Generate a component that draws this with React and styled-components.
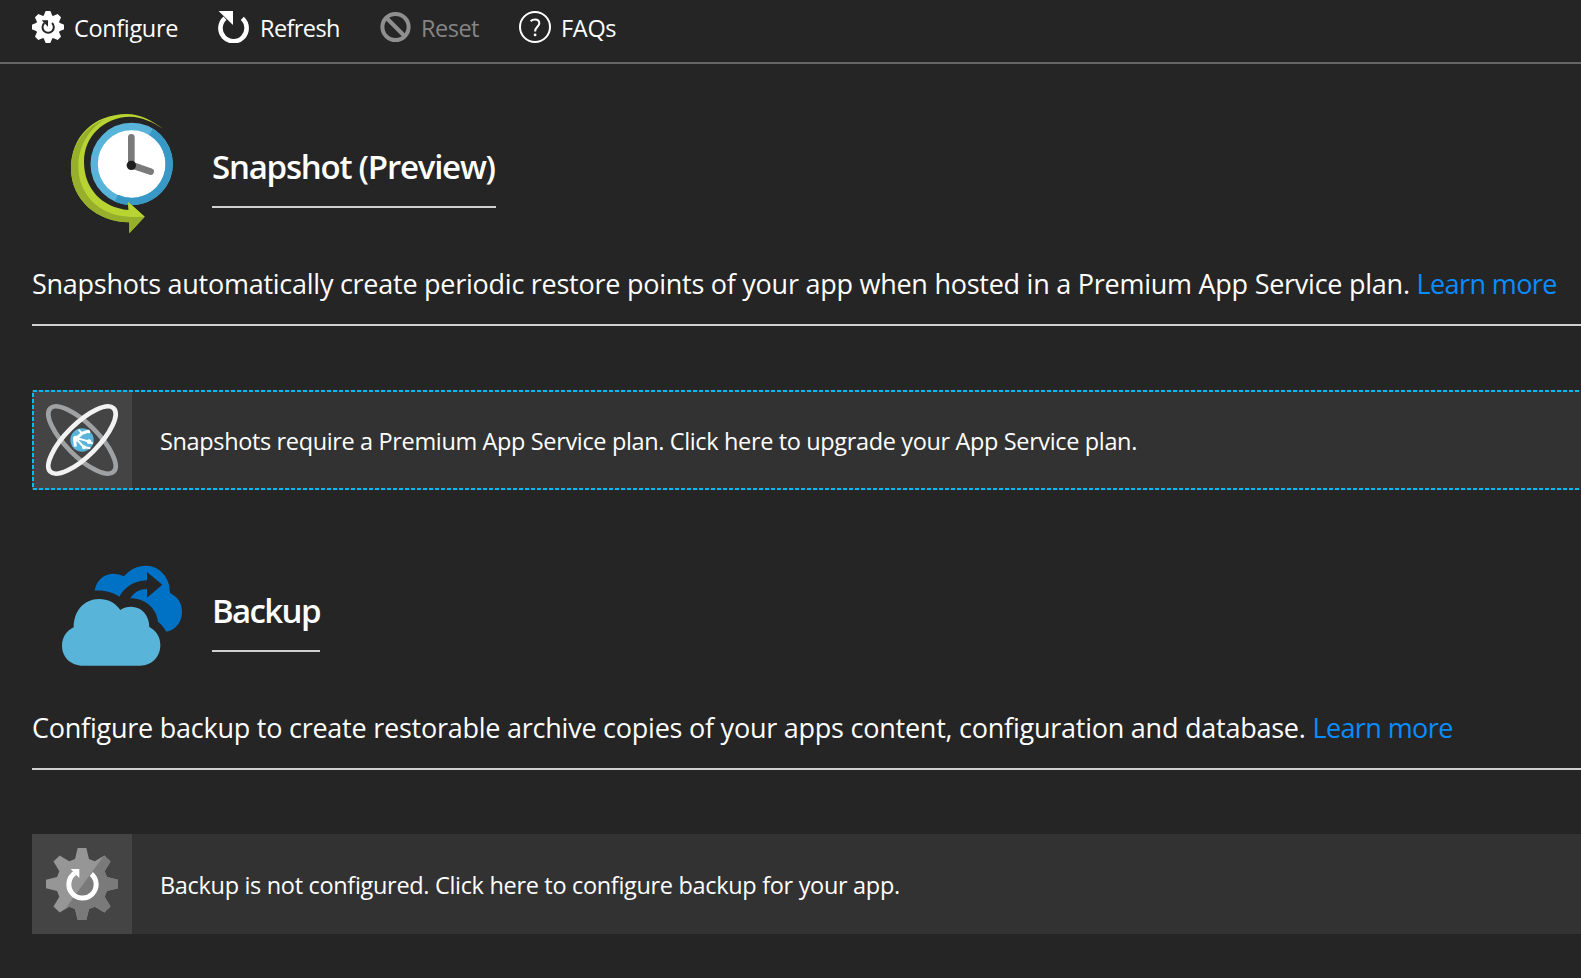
import React from "react";
import styled, { createGlobalStyle } from "styled-components";

const Global = createGlobalStyle`
  html, body { margin: 0; background: #252525; }
  body { overflow: hidden; font-family: "Open Sans", "Noto Sans", sans-serif; color: #fff; }
`;

const Page = styled.main`
  width: 100%;
  height: 978px;
  overflow: hidden;
  background: #252525;
`;

const Toolbar = styled.nav`
  box-sizing: border-box;
  height: 64px;
  padding: 11px 0 0 32px;
  border-bottom: 2px solid #666;
  display: flex;
  align-items: flex-start;
`;

const ToolButton = styled.button`
  display: flex;
  gap: ${(p) => (p.$muted ? 9 : 10)}px;
  width: ${(p) => p.$width}px;
  padding: 0;
  border: 0;
  background: none;
  color: ${(p) => (p.$muted ? "#858585" : "#fff")};
  font: 400 23.5px/32px "Open Sans", sans-serif;
  letter-spacing: ${(p) => p.$track}px;
  white-space: nowrap;
  text-align: left;
  svg { flex: none; }
`;

const ToolLabel = styled.span`
  padding-top: 1px;
`;

const Section = styled.section`
  height: 444px;
`;

const Header = styled.header`
  display: flex;
  height: 196px;
  padding-left: 50px;
`;

const HeroIcon = styled.svg`
  flex: none;
  width: 150px;
  height: 150px;
  margin-top: 36px;
`;

const Title = styled.h2`
  box-sizing: border-box;
  margin: 78px 0 0 12px;
  width: ${(p) => p.$width}px;
  height: 66px;
  border-bottom: 2px solid #d0d0d0;
  font-size: 33px;
  font-weight: 600;
  line-height: 50px;
  letter-spacing: ${(p) => p.$track}px;
  white-space: nowrap;
`;

const Description = styled.p`
  box-sizing: border-box;
  margin: 0 0 0 32px;
  height: 66px;
  border-bottom: 2px solid #d0d0d0;
  font-size: 27px;
  line-height: 48px;
  letter-spacing: ${(p) => p.$track}px;
  white-space: nowrap;
`;

const Link = styled.a`
  color: #0a8cff;
  letter-spacing: ${(p) => p.$track}px;
`;

const Card = styled.div`
  position: relative;
  display: flex;
  align-items: center;
  height: 100px;
  margin: 64px 0 0 32px;
  background: #323232;
`;

const Tile = styled.div`
  width: 100px;
  height: 100px;
  flex: none;
  background: #444;
`;

const CardText = styled.span`
  padding: 2px 0 0 28px;
  font-size: 23.5px;
  letter-spacing: ${(p) => p.$track}px;
  white-space: nowrap;
`;

const Focus = styled.svg`
  position: absolute;
  inset: 0;
  width: 100%;
  height: 100%;
`;

const gear = (tip, tipHalf, base, baseHalf) => {
  const pts = [];
  for (let k = 0; k < 8; k++) {
    const a = (k * Math.PI) / 4;
    [[-baseHalf, -base], [-tipHalf, -tip], [tipHalf, -tip], [baseHalf, -base]].forEach(([x, y]) => {
      pts.push(`${(x * Math.cos(a) - y * Math.sin(a)).toFixed(2)},${(x * Math.sin(a) + y * Math.cos(a)).toFixed(2)}`);
    });
  }
  return pts.join(" ");
};

const ConfigureIcon = () => (
  <svg width="32" height="32" viewBox="-48 -48 96 96">
    <polygon points={gear(46, 6, 33, 11)} fill="#fff" stroke="#fff" strokeWidth="4" strokeLinejoin="round" />
    <path d="M12 -12A17 17 0 1 1 -11 -12" fill="none" stroke="#252525" strokeWidth="6" />
    <path d="M-19 -20H0V-1Z" fill="#252525" />
  </svg>
);

const RefreshIcon = () => (
  <svg width="32" height="32" viewBox="0 0 32 32">
    <path d="M24.3 7.4A13.1 13.1 0 1 1 7 7.2" fill="none" stroke="#fff" strokeWidth="4.6" />
    <path d="M.6 0H15V14Z" fill="#fff" />
  </svg>
);

const ResetIcon = () => (
  <svg width="32" height="32" viewBox="0 0 32 32" fill="none" stroke="#8f8f8f" strokeWidth="4">
    <circle cx="15.5" cy="16" r="13.1" />
    <path d="M6.5 7L24.5 25" />
  </svg>
);

const FaqIcon = () => (
  <svg width="32" height="32" viewBox="0 0 32 32" fill="none" stroke="#fff" strokeWidth="2">
    <circle cx="16" cy="16" r="15" />
    <path d="M11.6 10.2C13 8.9 14.5 8.5 16 8.5C18.8 8.5 20.3 10 20.3 12.2C20.3 15.7 16.1 16 16.1 20.4" />
    <circle cx="16.1" cy="23.9" r="1.4" fill="#fff" stroke="none" />
  </svg>
);

const ClockIcon = () => (
  <HeroIcon viewBox="0 0 450 450">
    <path d="M339 86C305 62 272 42 230 42C130 43 63 110 63 205C63 300 142 367 238 367V400L284 350L234 305L236 330C155 322 102 265 102 185C102 110 160 52 240 50C275 51 305 64 339 86Z" fill="#b8d432" />
    <path d="M165 58C105 80 63 135 63 205C63 300 142 367 238 367V400L284 350H238C145 347 85 280 85 200C85 140 115 88 165 58Z" fill="#97b02c" />
    <circle cx="245" cy="192" r="112.5" fill="#fff" stroke="#59b4d9" strokeWidth="22" />
    <circle cx="245" cy="192" r="112.5" fill="none" stroke="#3999c6" strokeWidth="22" pathLength="360" strokeDasharray="173 187" transform="rotate(-59 245 192)" />
    <path d="M234 305L284 350H236V330Z" fill="#b8d432" />
    <path d="M244 112V195L302 215" fill="none" stroke="#7a7a7a" strokeWidth="20" strokeLinecap="round" />
    <circle cx="244" cy="196" r="14" fill="#1e1e1e" />
  </HeroIcon>
);

const CloudIcon = () => (
  <HeroIcon viewBox="0 -18 450 450">
    <path d="M134 122C139 90 163 71 190 71Q207 71 222 79C240 58 262 47 287 47C330 47 360 83 360 129C384 142 396 160 396 185C396 215 378 239 349 245C342 232 333 222 324 215C320 175 285 145 241 145C250 130 265 117 291 117V143L337 104L291 66V91C250 93 223 113 208 140C190 128 165 120 134 122Z" fill="#0072c6" />
    <path d="M100 347C61 347 36 320 36 287C36 262 50 242 71 232C71 183 102 147 147 147C174 147 196 158 211 180C221 173 231 170 243 170C275 170 298 196 298 231C319 243 331 260 331 286C331 320 306 347 270 347Z" fill="#59b4d9" />
  </HeroIcon>
);

const OrbitIcon = () => (
  <svg width="100" height="100" viewBox="36 30 300 300">
    <g fill="none" strokeWidth="14">
      <ellipse cx="186" cy="180" rx="134.5" ry="48" transform="rotate(45 186 180)" stroke="#a0a1a2" />
      <ellipse cx="186" cy="180" rx="134.5" ry="48" transform="rotate(-45 186 180)" stroke="#f2f2f2" />
    </g>
    <circle cx="186" cy="180" r="35" fill="#59b4d9" />
    <g stroke="#fff" strokeWidth="6" fill="none">
      <path d="M176 149L186 160M172 175L205 184L219 191M170 178L191 201L211 205" />
      <path d="M207 153L186 160L164 180L166 200" strokeWidth="9" />
    </g>
    <g fill="#fff">
      <circle cx="168" cy="176" r="9" />
      <circle cx="207" cy="185" r="7" />
      <circle cx="192" cy="202" r="6" />
      <circle cx="206" cy="155" r="5" />
    </g>
  </svg>
);

const BackupGearIcon = () => (
  <svg width="100" height="100" viewBox="-150 -150 300 300">
    <clipPath id="lowerHalf"><path d="M75 -98L-61 90V150H150V-98Z" /></clipPath>
    <polygon points={gear(108, 13, 75, 21)} fill="#969696" />
    <polygon points={gear(108, 13, 75, 21)} fill="#7a7a7a" clipPath="url(#lowerHalf)" />
    <path d="M28 -30A41 41 0 1 1 -21 -33" fill="none" stroke="#fff" strokeWidth="15" />
    <path d="M-34 -45H-8V-18Z" fill="#fff" />
  </svg>
);

const tools = [
  { label: "Configure", icon: <ConfigureIcon />, width: 186, track: -0.35 },
  { label: "Refresh", icon: <RefreshIcon />, width: 162, track: -0.6 },
  { label: "Reset", icon: <ResetIcon />, width: 139, track: -0.5, muted: true },
  { label: "FAQs", icon: <FaqIcon />, width: 110, track: -0.3 },
];

export default function App() {
  return (
    <Page>
      <Global />
      <Toolbar>
        {tools.map((t) => (
          <ToolButton key={t.label} $width={t.width} $track={t.track} $muted={t.muted}>
            {t.icon}
            <ToolLabel>{t.label}</ToolLabel>
          </ToolButton>
        ))}
      </Toolbar>
      <Section>
        <Header>
          <ClockIcon />
          <Title $width={284} $track={-1.22}>Snapshot (Preview)</Title>
        </Header>
        <Description $track={-0.255}>
          Snapshots automatically create periodic restore points of your app when hosted in a Premium App Service plan. <Link $track={-0.6}>Learn more</Link>
        </Description>
        <Card>
          <Tile><OrbitIcon /></Tile>
          <CardText $track={-0.36}>Snapshots require a Premium App Service plan. Click here to upgrade your App Service plan.</CardText>
          <Focus><rect x="1" y="1" width="1600" height="98" fill="none" stroke="#00bcf2" strokeWidth="2" strokeDasharray="4 2" /></Focus>
        </Card>
      </Section>
      <Section>
        <Header>
          <CloudIcon />
          <Title $width={108} $track={-1.65}>Backup</Title>
        </Header>
        <Description $track={-0.24}>
          Configure backup to create restorable archive copies of your apps content, configuration and database. <Link $track={-0.6}>Learn more</Link>
        </Description>
        <Card>
          <Tile><BackupGearIcon /></Tile>
          <CardText $track={-0.32}>Backup is not configured. Click here to configure backup for your app.</CardText>
        </Card>
      </Section>
    </Page>
  );
}
